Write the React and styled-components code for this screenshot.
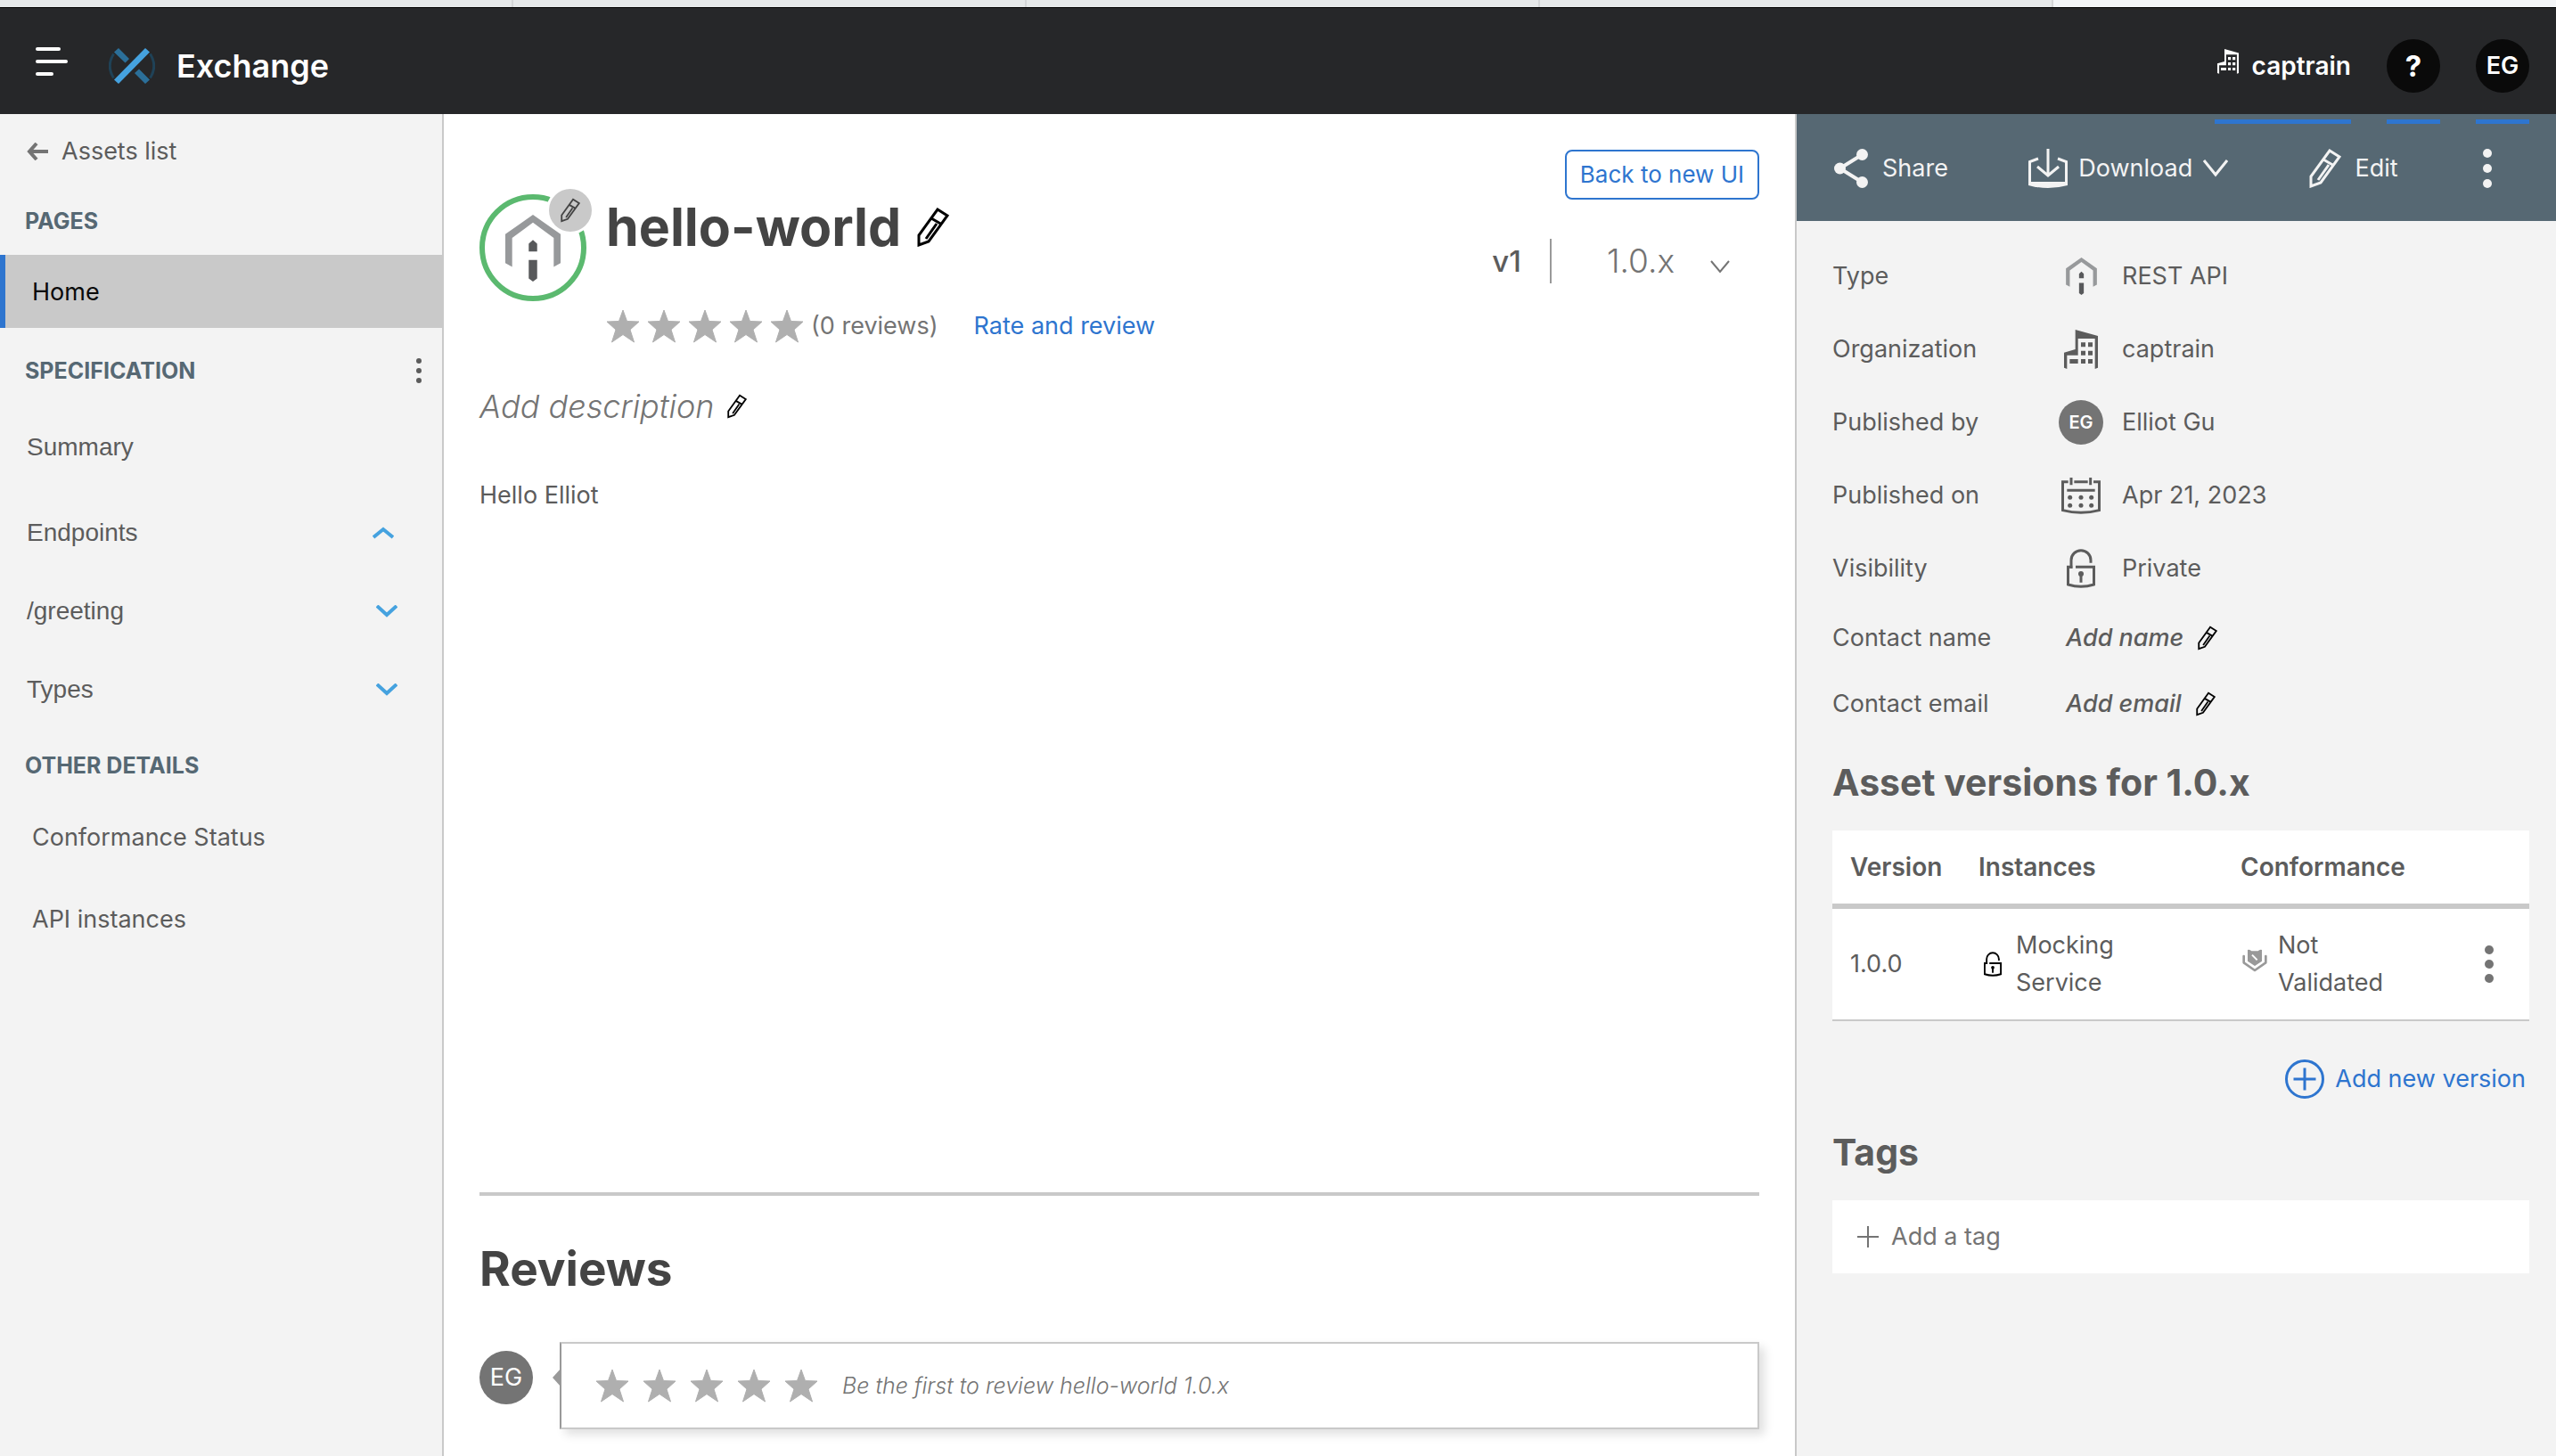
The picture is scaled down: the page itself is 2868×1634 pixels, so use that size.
import React from 'react';
import styled, { createGlobalStyle, css } from 'styled-components';

const c = {
  ink: '#444444',
  text: '#5c5c5c',
  muted: '#747474',
  line: '#c9c9c9',
  panel: '#f3f3f3',
  blue: '#2e75cf',
  sky: '#45a2df',
  slate: '#566873',
  star: '#afafaf',
};

const GlobalStyle = createGlobalStyle`
  *, *::before, *::after { box-sizing: border-box; }
  body {
    margin: 0;
    background: #fff;
    color: ${c.text};
    font: 400 27px/42px Inter, "Liberation Sans", sans-serif;
  }
  button, select { font: inherit; color: inherit; }
  button { display: inline-flex; align-items: center; margin: 0; padding: 0; border: 0; background: none; cursor: pointer; }
  a { color: inherit; text-decoration: none; }
  h1, h2, h3, p, dl, dd, ul { margin: 0; padding: 0; }
  svg { display: block; flex: none; }
`;

/* ---------- icons ---------- */

const Pencil = ({ w = 22, h = 28, stroke = 3, color = '#000' }) => (
  <svg width={w} height={h} viewBox="0 0 36 44" fill="none" stroke={color} strokeWidth={stroke} aria-hidden="true">
    <path d="M2 42V31L23 2L34 9L13 38ZM16 12L28 19M22 18L10 35" />
  </svg>
);

const House = ({ w, h }) => (
  <svg width={w} height={h} viewBox="0 0 105 127" aria-hidden="true">
    <path fill="#97999b" d="M52.500 0L105 37V92L92 99V44L52.500 15L13 44V99L0 92V37Z" />
    <path fill="#58595b" d="M44.500 55L52.500 48L60.500 55V70H44.500ZM44.500 86H60.500V121L52.500 127L44.500 121Z" />
  </svg>
);

const Building = ({ w, h, box, color }) => (
  <svg width={w} height={h} viewBox={box} fill={color} aria-hidden="true">
    <path d="M38 0L114 21V128L104 132V30H47V86H10V132L0 128V77L38 66Z" />
    <path d="M57 43h15v15H57zM81 43h15v15H81zM57 71h15v15H57zM81 71h15v15H81zM57 99h15v15H57zM81 99h15v15H81zM19 99h28v15H19z" />
  </svg>
);

const Calendar = () => (
  <svg width="44" height="41" viewBox="0 0 132 123" fill="none" stroke={c.text} strokeWidth="9" aria-hidden="true">
    <path d="M23 14H4.500V110Q66 126 127.500 110V14H108M43 14H89M33 0V25M98 0V25M19 43H113" />
    <g fill={c.text} stroke="none">
      <circle cx="29" cy="67" r="7.500" /><circle cx="66" cy="67" r="7.500" /><circle cx="101" cy="67" r="7.500" />
      <circle cx="29" cy="94" r="7.500" /><circle cx="66" cy="94" r="7.500" /><circle cx="101" cy="94" r="7.500" />
    </g>
  </svg>
);

const Lock = ({ w, h, color }) => (
  <svg width={w} height={h} viewBox="0 0 96 132" fill="none" stroke={color} strokeWidth="9" aria-hidden="true">
    <path d="M15 66V38A33 33 0 0 1 81 38V47M20 61H4.500V120Q48 134 91.500 120V61H30M48 84V113" />
    <circle cx="48" cy="84" r="9" fill={color} stroke="none" />
  </svg>
);

const Shield = () => (
  <svg width="28" height="34" viewBox="0 0 84 102" fill="none" aria-hidden="true">
    <path d="M5 24V46L42 72L79 46V24" stroke="#999" strokeWidth="8" strokeLinecap="round" strokeLinejoin="round" />
    <path d="M18 3Q26 1 31 7H53Q58 1 66 3V41L42 57L18 41Z" fill="#999" />
    <path d="M33 20L50 37" stroke="#fff" strokeWidth="6" />
  </svg>
);

const Dots = ({ w, h, r, gap, color }) => (
  <svg width={w} height={h} viewBox={`0 0 ${w} ${h}`} fill={color} aria-hidden="true">
    <circle cx={w / 2} cy={h / 2 - gap} r={r} />
    <circle cx={w / 2} cy={h / 2} r={r} />
    <circle cx={w / 2} cy={h / 2 + gap} r={r} />
  </svg>
);

const Chevron = ({ w, h, stroke, color, up }) => (
  <svg width={w} height={h} viewBox={`0 0 ${w} ${h}`} fill="none" stroke={color} strokeWidth={stroke} aria-hidden="true">
    <path d={up ? `M1 ${h - 2}L${w / 2} 3L${w - 1} ${h - 2}` : `M1 1L${w / 2} ${h - 3}L${w - 1} 1`} />
  </svg>
);

const Star = () => (
  <svg width="38" height="38" viewBox="0 0 38 38" fill={c.star} stroke={c.star} strokeWidth="1" strokeLinejoin="round" aria-hidden="true">
    <path d="M19 1L23.500 13.500L37 14L27 23L31.500 37L19 28.500L6.500 37L11 23L1 14L14.500 13.500Z" />
  </svg>
);

const ExchangeLogo = () => (
  <svg width="52" height="40" viewBox="0 0 52 40" aria-hidden="true">
    <path d="M5.500 6.500Q-3 20 5.500 33.500M46.500 6.500Q55 20 46.500 33.500" fill="none" stroke="#1f4257" strokeWidth="3" />
    <path d="M11 0L6 4.500L18.500 16.500L23 12ZM41 40L46 35.500L34 23.500L29 28Z" fill="#2b6f99" />
    <path d="M41 0L46 4.500L11 40L6 35.500Z" fill={c.sky} />
  </svg>
);

const ShareIcon = () => (
  <svg width="38" height="44" viewBox="0 0 38 44" fill={c.panel} stroke={c.panel} aria-hidden="true">
    <path d="M31.500 6.500L6.500 22L31.500 37.500" fill="none" strokeWidth="4" />
    <g stroke="none"><circle cx="31.500" cy="6.500" r="6.500" /><circle cx="6.500" cy="22" r="6.500" /><circle cx="31.500" cy="37.500" r="6.500" /></g>
  </svg>
);

const DownloadIcon = () => (
  <svg width="44" height="44" viewBox="0 0 44 44" fill="none" stroke={c.panel} strokeWidth="3" aria-hidden="true">
    <path d="M11 11L1.500 14.500V38.500H42.500V14.500L33 11M22 0V29M10 20L22 30L34 20" />
    <path d="M0 38H44V41Q22 47 0 41Z" fill={c.panel} stroke="none" />
  </svg>
);

/* ---------- page frame ---------- */

const TabStrip = styled.div`
  display: grid;
  grid-template-columns: repeat(4, 1fr) 564px;
  height: 9px;
  border-bottom: 1px solid #000;
`;
const TabEdge = styled.span`
  background: ${(p) => (p.$active ? '#f3f5f7' : '#e5e8e9')};
  border-right: ${(p) => (p.$active ? 0 : '2px')} solid #d3d5d7;
`;
const TopBar = styled.header`
  position: relative;
  z-index: 1;
  display: flex;
  align-items: center;
  height: 119px;
  padding: 10px 30px 0 40px;
  background: #262729;
  color: #fff;
`;
const Brand = styled.a`
  display: flex;
  align-items: center;
  gap: 24px;
  margin-left: 46px;
  font-size: 36px;
  font-weight: 600;
`;
const Account = styled.nav`
  display: flex;
  gap: 40px;
  margin-left: auto;
`;
const underline = css`
  position: relative;
  height: 60px;
  &::after {
    content: '';
    position: absolute;
    left: 0;
    right: 0;
    bottom: -35px;
    height: 5px;
    background: ${c.blue};
  }
`;
const OrgButton = styled.button`
  ${underline}
  gap: 12px;
  font-size: 28px;
  font-weight: 600;
`;
const RoundButton = styled.button`
  ${underline}
  justify-content: center;
  width: 60px;
  border-radius: 50%;
  background: #0a0a0a;
  font-size: ${(p) => (p.$large ? '33px' : '27px')};
  font-weight: ${(p) => (p.$large ? 700 : 600)};
`;
const Columns = styled.div`
  display: grid;
  grid-template-columns: 498px minmax(0, 1fr) 854px;
  min-height: calc(100vh - 128px);
`;

/* ---------- left navigation ---------- */

const Sidebar = styled.nav`
  padding-top: 4px;
  border-right: 2px solid ${c.line};
  background: ${c.panel};
`;
const BackLink = styled.a`
  display: flex;
  align-items: center;
  gap: 14px;
  height: 76px;
  padding-left: 30px;
`;
const SectionTitle = styled.h3`
  display: flex;
  align-items: center;
  justify-content: space-between;
  height: ${(p) => p.$height}px;
  padding: 2px 20px 0 28px;
  color: ${c.slate};
  font-size: 25px;
  font-weight: 700;
`;
const PageLink = styled.a`
  display: flex;
  align-items: center;
  height: ${(p) => (p.$current ? 82 : 92)}px;
  padding-left: 36px;
  ${(p) => p.$current && css`
    margin-right: -2px;
    padding: 2px 0 0 30px;
    border-left: 6px solid ${c.blue};
    background: #c9c9c9;
    color: #0a0a0a;
  `}
`;
const Tree = styled.div`
  margin-bottom: 4px;
  font-family: "Liberation Sans", Arial, sans-serif;
  font-size: 28px;
`;
const SummaryLink = styled.a`
  display: flex;
  align-items: center;
  height: 80px;
  margin-bottom: 12px;
  padding-left: 30px;
`;
const TreeButton = styled.button`
  display: flex;
  justify-content: space-between;
  width: 100%;
  height: 88px;
  padding: 0 ${(p) => (p.$open ? 54 : 50)}px 0 30px;
`;

/* ---------- asset content ---------- */

const Main = styled.main`
  display: flex;
  flex-direction: column;
  padding: 40px 40px 30px;
  background: #fff;
`;
const AssetHead = styled.div`
  display: flex;
  justify-content: space-between;
  align-items: flex-start;
`;
const Identity = styled.div`
  display: flex;
  gap: 16px;
  padding-top: 44px;
`;
const AssetIcon = styled.div`
  position: relative;
  width: 126px;
  height: 126px;
`;
const Ring = styled.div`
  display: flex;
  align-items: center;
  justify-content: center;
  width: 120px;
  height: 120px;
  margin-top: 6px;
  border: 6px solid #5bb96f;
  border-radius: 50%;
`;
const Badge = styled.button`
  position: absolute;
  top: 0;
  right: 0;
  justify-content: center;
  width: 48px;
  height: 48px;
  border-radius: 50%;
  background: ${c.line};
  box-shadow: 0 0 0 3px #fff;
`;
const TitleRow = styled.div`
  display: flex;
  align-items: center;
  gap: 18px;
  margin-bottom: 48px;
`;
const Title = styled.h1`
  color: ${c.ink};
  font-size: 59px;
  font-weight: 700;
  line-height: 86px;
`;
const Rating = styled.div`
  display: flex;
  align-items: center;
  gap: 8px;
  height: 40px;
  color: ${c.muted};
`;
const RateLink = styled.a`
  margin-left: 32px;
  color: ${c.blue};
`;
const Side = styled.div`
  display: flex;
  flex-direction: column;
  align-items: flex-end;
  gap: 44px;
`;
const OutlineButton = styled.button`
  height: 56px;
  padding: 0 15px;
  border: 2px solid ${c.blue};
  border-radius: 8px;
  color: ${c.blue};
  font-size: 26px;
`;
const Versions = styled.div`
  display: flex;
  align-items: center;
  height: 50px;
`;
const Major = styled.span`
  padding-right: 32px;
  font-size: 33px;
  font-weight: 500;
`;
const SelectBox = styled.label`
  position: relative;
  display: flex;
  align-items: center;
  width: 235px;
  height: 100%;
  border-left: 2px solid #999;
  svg { position: absolute; right: 33px; bottom: 10px; pointer-events: none; }
`;
const Select = styled.select`
  width: 100%;
  height: 100%;
  padding: 0 0 0 62px;
  border: 0;
  background: none;
  appearance: none;
  color: ${c.muted};
  font-size: 37px;
  font-weight: 300;
  line-height: 50px;
`;
const Description = styled.div`
  display: flex;
  align-items: center;
  gap: 14px;
  margin-top: 42px;
  color: ${c.muted};
  font-size: 36px;
  font-style: italic;
  font-weight: 300;
  line-height: 56px;
`;
const Body = styled.p`
  flex: 1;
  margin-top: 51px;
`;
const Reviews = styled.section`
  padding-top: 46px;
  border-top: 4px solid ${c.line};
`;
const ReviewsTitle = styled.h2`
  margin-bottom: 46px;
  color: ${c.ink};
  font-size: 53px;
  font-weight: 700;
  line-height: 72px;
`;
const ReviewRow = styled.div`
  display: flex;
  gap: 30px;
`;
const Avatar = styled.span`
  display: inline-flex;
  flex: none;
  align-items: center;
  justify-content: center;
  width: ${(p) => p.$size}px;
  height: ${(p) => p.$size}px;
  border-radius: 50%;
  background: ${c.muted};
  color: #fff;
  font-size: ${(p) => (p.$size > 50 ? 27 : 20)}px;
  font-weight: ${(p) => (p.$size > 50 ? 400 : 600)};
`;
const ReviewAvatar = styled.div`
  display: flex;
  padding-top: 10px;
`;
const ReviewBox = styled.button`
  position: relative;
  flex: 1;
  gap: 15px;
  height: 98px;
  padding-left: 38px;
  border: 2px solid ${c.line};
  border-left-color: #999;
  background: #fff;
  box-shadow: 6px 6px 10px rgba(0, 0, 0, 0.12);
  &::before {
    content: '';
    position: absolute;
    right: 100%;
    top: 27px;
    border: solid transparent;
    border-width: 11px 10px 11px 0;
    border-right-color: #999;
  }
`;
const ReviewHint = styled.span`
  padding-left: 12px;
  color: ${c.muted};
  font-size: 25px;
  font-style: italic;
  font-weight: 300;
`;

/* ---------- details panel ---------- */

const Panel = styled.aside`
  border-left: 2px solid ${c.line};
  background: ${c.panel};
`;
const Toolbar = styled.div`
  display: flex;
  align-items: center;
  justify-content: space-between;
  height: 120px;
  padding: 2px 67px 0 42px;
  background: ${c.slate};
  color: ${c.panel};
`;
const ToolButton = styled.button`
  gap: ${(p) => p.$gap}px;
`;
const PanelBody = styled.div`
  padding: 21px 30px 40px 40px;
`;
const Row = styled.div`
  display: grid;
  grid-template-columns: 254px 1fr;
  align-items: center;
  height: ${(p) => (p.$short ? 74 : 82)}px;
`;
const Value = styled.dd`
  display: flex;
  align-items: center;
  gap: 21px;
`;
const IconCell = styled.span`
  display: flex;
  justify-content: center;
  width: ${(p) => p.$width}px;
`;
const InlineAdd = styled.button`
  gap: 16px;
  padding-left: 8px;
  font-style: italic;
  font-weight: 500;
`;
const PanelTitle = styled.h2`
  margin: 23px 0 26px;
  font-size: 41px;
  font-weight: 700;
  line-height: 56px;
`;
const VersionTable = styled.table`
  width: 100%;
  table-layout: fixed;
  border-spacing: 0;
  background: #fff;
  text-align: left;
`;
const Th = styled.th`
  width: ${(p) => p.$width};
  height: 88px;
  padding: 0 0 0 20px;
  border-bottom: 6px solid ${c.line};
  font-size: 28px;
  font-weight: 600;
`;
const Td = styled.td`
  padding: 20px 0 20px ${(p) => (p.$center ? 0 : 20)}px;
  border-bottom: 2px solid ${c.line};
  text-align: ${(p) => (p.$center ? 'center' : 'left')};
  button { vertical-align: middle; }
`;
const CellContent = styled.div`
  display: flex;
  align-items: center;
  gap: 10px;
`;
const CellText = styled.span`
  max-width: 130px;
`;
const AddVersion = styled.div`
  display: flex;
  justify-content: flex-end;
  margin: 43px 0 32px;
  padding-right: 4px;
`;
const AddVersionButton = styled.button`
  gap: 12px;
  color: ${c.blue};
`;
const AddTag = styled.button`
  display: flex;
  gap: 14px;
  width: 100%;
  height: 82px;
  padding-left: 28px;
  background: #fff;
  color: ${c.muted};
`;

const Stars = () => [1, 2, 3, 4, 5].map((n) => <Star key={n} />);

const details = [
  ['Type', <House w={35} h={42} />, 'REST API'],
  ['Organization', <Building w={38} h={44} box="0 0 114 132" color={c.text} />, 'captrain'],
  ['Published by', <Avatar $size={50}>EG</Avatar>, 'Elliot Gu'],
  ['Published on', <Calendar />, 'Apr 21, 2023'],
  ['Visibility', <Lock w={32} h={44} color={c.text} />, 'Private'],
];

export default function App() {
  return (
    <>
      <GlobalStyle />
      <TabStrip aria-hidden="true">
        <TabEdge /><TabEdge /><TabEdge /><TabEdge /><TabEdge $active />
      </TabStrip>
      <TopBar>
        <button aria-label="Open menu">
          <svg width="36" height="42" viewBox="0 0 36 42" fill="#fff" aria-hidden="true">
            <rect width="28" height="4" rx="2" /><rect y="14" width="36" height="4" rx="2" /><rect y="28" width="20" height="4" rx="2" />
          </svg>
        </button>
        <Brand href="#exchange"><ExchangeLogo />Exchange</Brand>
        <Account aria-label="Account">
          <OrgButton><Building w={30} h={38} box="-14 0 142 180" color="#fff" />captrain</OrgButton>
          <RoundButton $large aria-label="Help">?</RoundButton>
          <RoundButton>EG</RoundButton>
        </Account>
      </TopBar>

      <Columns>
        <Sidebar aria-label="Asset pages">
          <BackLink href="#assets">
            <svg width="25" height="20" viewBox="0 0 25 20" fill="none" stroke={c.muted} strokeWidth="4" aria-hidden="true">
              <path d="M11 1L3 10L11 19M3 10H24" />
            </svg>
            Assets list
          </BackLink>
          <SectionTitle $height={78}>PAGES</SectionTitle>
          <PageLink href="#home" $current aria-current="page">Home</PageLink>
          <SectionTitle $height={94}>
            SPECIFICATION
            <button aria-label="Specification options"><Dots w={12} h={30} r={3} gap={11} color={c.text} /></button>
          </SectionTitle>
          <Tree>
            <SummaryLink href="#summary">Summary</SummaryLink>
            <TreeButton $open aria-expanded="true">Endpoints<Chevron w={24} h={14} stroke={4} color={c.sky} up /></TreeButton>
            <TreeButton aria-expanded="false">/greeting<Chevron w={24} h={14} stroke={4} color={c.sky} /></TreeButton>
            <TreeButton aria-expanded="false">Types<Chevron w={24} h={14} stroke={4} color={c.sky} /></TreeButton>
          </Tree>
          <SectionTitle $height={72}>OTHER DETAILS</SectionTitle>
          <PageLink href="#conformance">Conformance Status</PageLink>
          <PageLink href="#instances">API instances</PageLink>
        </Sidebar>

        <Main>
          <AssetHead>
            <Identity>
              <AssetIcon>
                <Ring><House w={62} h={75} /></Ring>
                <Badge aria-label="Edit icon"><Pencil w={22} h={28} color={c.ink} /></Badge>
              </AssetIcon>
              <div>
                <TitleRow>
                  <Title>hello-world</Title>
                  <button aria-label="Edit name"><Pencil w={36} h={44} /></button>
                </TitleRow>
                <Rating>
                  <Stars />
                  <span>(0 reviews)</span>
                  <RateLink href="#review">Rate and review</RateLink>
                </Rating>
              </div>
            </Identity>
            <Side>
              <OutlineButton>Back to new UI</OutlineButton>
              <Versions>
                <Major>v1</Major>
                <SelectBox>
                  <Select aria-label="Version" defaultValue="1.0.x"><option>1.0.x</option></Select>
                  <Chevron w={22} h={16} stroke={2} color={c.muted} />
                </SelectBox>
              </Versions>
            </Side>
          </AssetHead>
          <Description>
            Add description
            <button aria-label="Edit description"><Pencil /></button>
          </Description>
          <Body>Hello Elliot</Body>
          <Reviews>
            <ReviewsTitle>Reviews</ReviewsTitle>
            <ReviewRow>
              <ReviewAvatar><Avatar $size={60}>EG</Avatar></ReviewAvatar>
              <ReviewBox>
                <Stars />
                <ReviewHint>Be the first to review hello-world 1.0.x</ReviewHint>
              </ReviewBox>
            </ReviewRow>
          </Reviews>
        </Main>

        <Panel>
          <Toolbar>
            <ToolButton $gap={16}><ShareIcon />Share</ToolButton>
            <ToolButton $gap={12}><DownloadIcon />Download<Chevron w={28} h={20} stroke={3} color={c.panel} /></ToolButton>
            <ToolButton $gap={16}><Pencil w={36} h={44} color={c.panel} />Edit</ToolButton>
            <ToolButton $gap={0} aria-label="More actions"><Dots w={20} h={46} r={5} gap={17} color={c.panel} /></ToolButton>
          </Toolbar>
          <PanelBody>
            <dl>
              {details.map(([label, icon, value]) => (
                <Row key={label}>
                  <dt>{label}</dt>
                  <Value><IconCell $width={50}>{icon}</IconCell>{value}</Value>
                </Row>
              ))}
              <Row $short><dt>Contact name</dt><dd><InlineAdd>Add name<Pencil /></InlineAdd></dd></Row>
              <Row $short><dt>Contact email</dt><dd><InlineAdd>Add email<Pencil /></InlineAdd></dd></Row>
            </dl>

            <PanelTitle>Asset versions for 1.0.x</PanelTitle>
            <VersionTable>
              <thead>
                <tr>
                  <Th $width="144px">Version</Th>
                  <Th $width="294px">Instances</Th>
                  <Th $width="auto">Conformance</Th>
                  <Th $width="90px" aria-label="Actions" />
                </tr>
              </thead>
              <tbody>
                <tr>
                  <Td>1.0.0</Td>
                  <Td><CellContent><IconCell $width={32}><Lock w={20} h={28} color="#000" /></IconCell><CellText>Mocking Service</CellText></CellContent></Td>
                  <Td><CellContent><IconCell $width={32}><Shield /></IconCell><CellText>Not Validated</CellText></CellContent></Td>
                  <Td $center><button aria-label="Version actions"><Dots w={20} h={44} r={5} gap={16} color={c.muted} /></button></Td>
                </tr>
              </tbody>
            </VersionTable>
            <AddVersion>
              <AddVersionButton>
                <svg width="44" height="44" viewBox="0 0 44 44" fill="none" stroke={c.blue} strokeWidth="3" aria-hidden="true">
                  <circle cx="22" cy="22" r="20.500" /><path d="M9.500 22H34.500M22 9.500V34.500" />
                </svg>
                Add new version
              </AddVersionButton>
            </AddVersion>

            <PanelTitle>Tags</PanelTitle>
            <AddTag>
              <svg width="24" height="24" viewBox="0 0 24 24" fill="none" stroke={c.muted} strokeWidth="2" aria-hidden="true">
                <path d="M0 12H24M12 0V24" />
              </svg>
              Add a tag
            </AddTag>
          </PanelBody>
        </Panel>
      </Columns>
    </>
  );
}
